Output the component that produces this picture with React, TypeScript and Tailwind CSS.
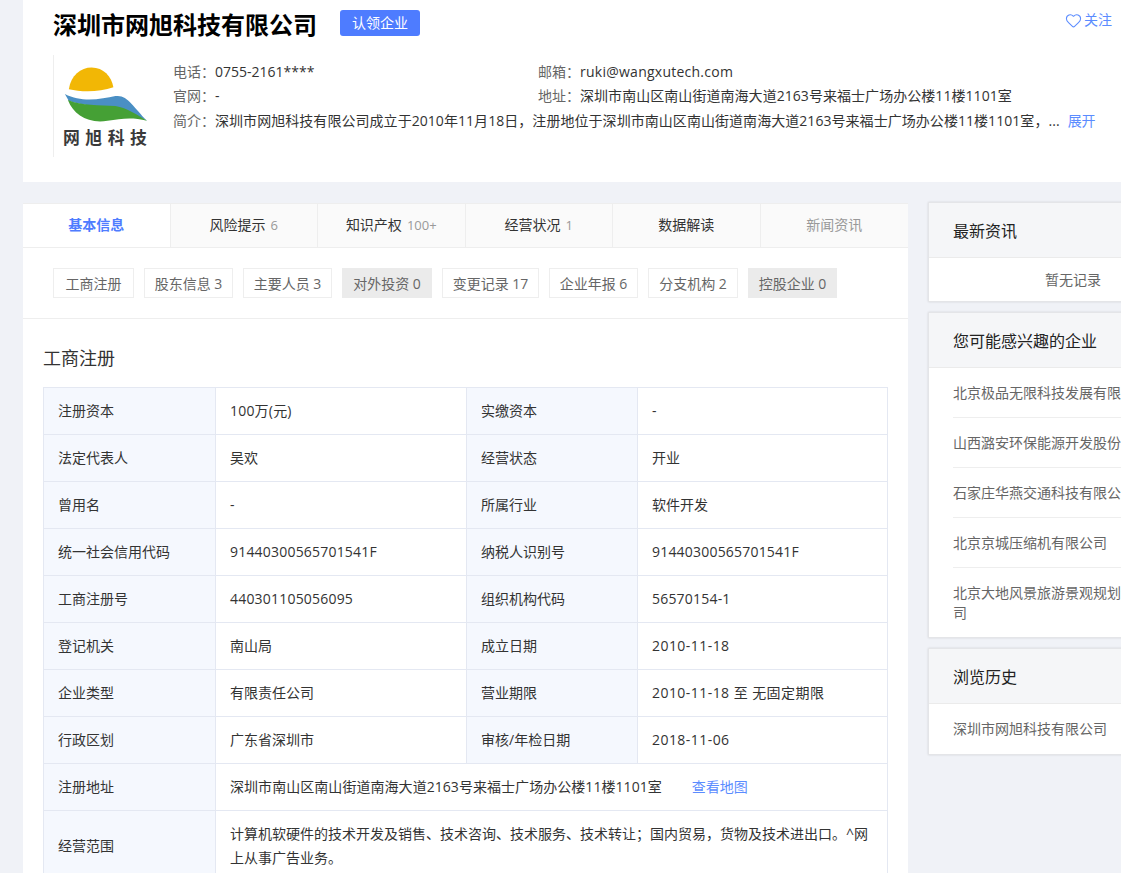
import React from "react";
import { Heart } from "lucide-react";

const FONT = "font-['Open_Sans','Noto_Sans_CJK_SC',sans-serif]";

const tabs = [
  { name: "基本信息", active: true },
  { name: "风险提示", num: "6" },
  { name: "知识产权", num: "100+" },
  { name: "经营状况", num: "1" },
  { name: "数据解读" },
  { name: "新闻资讯", disabled: true },
];

const subTabs = [
  { name: "工商注册", w: "w-[81px]" },
  { name: "股东信息 3", w: "w-[89px]" },
  { name: "主要人员 3", w: "w-[89px]" },
  { name: "对外投资 0", w: "w-[90px]", off: true },
  { name: "变更记录 17", w: "w-[97px]" },
  { name: "企业年报 6", w: "w-[89px]" },
  { name: "分支机构 2", w: "w-[90px]" },
  { name: "控股企业 0", w: "w-[89px]", off: true },
];

const rows = [
  ["注册资本", "100万(元)", "实缴资本", "-"],
  ["法定代表人", "吴欢", "经营状态", "开业"],
  ["曾用名", "-", "所属行业", "软件开发"],
  ["统一社会信用代码", "91440300565701541F", "纳税人识别号", "91440300565701541F"],
  ["工商注册号", "440301105056095", "组织机构代码", "56570154-1"],
  ["登记机关", "南山局", "成立日期", "2010-11-18"],
  ["企业类型", "有限责任公司", "营业期限", "2010-11-18 至 无固定期限"],
  ["行政区划", "广东省深圳市", "审核/年检日期", "2018-11-06"],
];

const related = [
  "北京极品无限科技发展有限责任公司",
  "山西潞安环保能源开发股份有限公司",
  "石家庄华燕交通科技有限公司",
  "北京京城压缩机有限公司",
  "北京大地风景旅游景观规划设计有限公司",
];

// numbers run a little wider in the reference than in Open Sans
const valueClass = (v: string) => {
  if (/^\d{4}-/.test(v)) return "tracking-[0.45px]";
  if (/^\d/.test(v)) return "tracking-[0.2px]";
  return "";
};

const Logo = () => (
  <svg width="100" height="102" viewBox="0 0 100 102" className="shrink-0 border-l border-[#eeeeee]">
    <path d="M15 34 C17 20 27 12 38 12 C50 12 58 21 60 32 C46 37 28 37 15 34 Z" fill="#f2b705" />
    <path d="M11 39 C28 48 48 44 62 41 C74 39 80 52 94 66 C84 60 72 58 62 55 C44 51 26 50 15 46 Z" fill="#4a8fc4" />
    <path d="M14 45 C28 51 46 50 62 51 C74 53 84 60 94 66 C78 62 68 64 54 66 C34 69 20 60 14 45 Z" fill="#45a035" />
    <text x="9" y="89" fontSize="17" fontWeight="700" letterSpacing="5.6" fill="#3a3a3a" fontFamily="'Noto Sans CJK SC', sans-serif">
      网旭科技
    </text>
  </svg>
);

const SideCard = ({ title, children }: { title: string; children: React.ReactNode }) => (
  <div className="w-[290px] bg-white border border-[#e4e5e8] shadow-[0_0_2px_rgba(0,0,0,0.12)]">
    <div className="h-[55px] pl-6 pt-0.5 flex items-center bg-[#f5f6f8] border-b border-[#ebebeb] text-base text-[#222]">
      {title}
    </div>
    {children}
  </div>
);

export default function App() {
  return (
    <div className={`${FONT} w-[1121px] h-[873px] overflow-hidden bg-[#f0f2f7] pl-[23px] text-sm text-[#333]`}>
      <div className="w-[1098px] h-[182px] bg-white pl-[30px] pr-[9px]">
        <div className="h-[55px] flex">
          <h1 className="text-2xl font-bold text-black leading-[50px]">深圳市网旭科技有限公司</h1>
          <div className="ml-[23px] mt-[10px] w-[80px] h-[26px] flex items-center justify-center rounded-[3px] bg-[#4e7cff] text-white">
            认领企业
          </div>
          <div className="ml-auto mt-[10px] h-5 flex items-center gap-0.5 text-[#5b8cff]">
            <Heart size={17} strokeWidth={1.5} />
            <span>关注</span>
          </div>
        </div>
        <div className="flex">
          <Logo />
          <div className="ml-5 pt-[5px] flex-1 min-w-0 leading-6 text-[#666]">
            <div className="flex">
              <div className="w-[365px]">
                电话：<span className="text-[#333]">0755-2161****</span>
              </div>
              <div>
                邮箱：<span className="text-[#333] tracking-[0.25px]">ruki@wangxutech.com</span>
              </div>
            </div>
            <div className="flex">
              <div className="w-[365px]">
                官网：<span className="text-[#333]">-</span>
              </div>
              <div>
                地址：<span className="text-[#333] tracking-[0.05px]">深圳市南山区南山街道南海大道2163号来福士广场办公楼11楼1101室</span>
              </div>
            </div>
            <div className="flex mt-px">
              <span className="shrink-0">简介：</span>
              <span className="text-[#333] whitespace-nowrap tracking-[0.05px]">
                深圳市网旭科技有限公司成立于2010年11月18日，注册地位于深圳市南山区南山街道南海大道2163号来福士广场办公楼11楼1101室，...
              </span>
              <span className="ml-2 shrink-0 text-[#5b8cff]">展开</span>
            </div>
          </div>
        </div>
      </div>

      <div className="flex items-start mt-[21px]">
        <div className="w-[885px] h-[680px] bg-white">
          <div className="grid grid-cols-6 h-[45px] border-t border-[#eeeeee]">
            {tabs.map((t) => (
              <div
                key={t.name}
                className={
                  t.active
                    ? "flex items-center justify-center pb-0.5 border-r border-b border-[#eeeeee] font-bold text-[#4e7cff]"
                    : `flex items-center justify-center pb-0.5 bg-[#fafafa] border-b border-r border-[#eeeeee] last:border-r-0 ${t.disabled ? "text-[#999]" : "text-[#333]"}`
                }
              >
                <p>
                  {t.name}
                  {t.num && <span className="ml-[5px] text-[13px] text-[#999]">{t.num}</span>}
                </p>
              </div>
            ))}
          </div>

          <div className="h-[71px] pl-[30px] pt-5 flex gap-2.5 border-b border-[#eeeeee]">
            {subTabs.map((s) => (
              <div
                key={s.name}
                className={
                  s.off
                    ? `${s.w} h-[30px] pt-0.5 flex items-center justify-center whitespace-nowrap bg-[#ebebeb] text-[#666]`
                    : `${s.w} h-[30px] pt-0.5 flex items-center justify-center whitespace-nowrap border border-[#eeeeee] text-[#666]`
                }
              >
                {s.name}
              </div>
            ))}
          </div>

          <div className="px-5">
            <h2 className="mt-[25px] mb-[15px] text-lg leading-[28px] text-[#333]">工商注册</h2>
            <table className="w-[844px] table-fixed border-collapse text-[#333]">
              <colgroup>
                <col className="w-[172px]" />
                <col className="w-[251px]" />
                <col className="w-[171px]" />
                <col className="w-[250px]" />
              </colgroup>
              <tbody>
                {rows.map((r) => (
                  <tr key={r[0]} className="h-[47px]">
                    <td className="pl-3.5 border border-[#e4e8f2] bg-[#f5f8fe]">{r[0]}</td>
                    <td className={`pl-3.5 border border-[#e4e8f2] ${valueClass(r[1])}`}>{r[1]}</td>
                    <td className="pl-3.5 border border-[#e4e8f2] bg-[#f5f8fe]">{r[2]}</td>
                    <td className={`pl-3.5 border border-[#e4e8f2] ${valueClass(r[3])}`}>{r[3]}</td>
                  </tr>
                ))}
                <tr className="h-[47px]">
                  <td className="pl-3.5 border border-[#e4e8f2] bg-[#f5f8fe]">注册地址</td>
                  <td colSpan={3} className="pl-3.5 border border-[#e4e8f2]">
                    <span className="tracking-[0.05px]">深圳市南山区南山街道南海大道2163号来福士广场办公楼11楼1101室</span>
                    <span className="ml-[30px] text-[#5b8cff]">查看地图</span>
                  </td>
                </tr>
                <tr>
                  <td className="pl-3.5 border border-[#e4e8f2] bg-[#f5f8fe]">经营范围</td>
                  <td colSpan={3} className="px-3.5 py-[11px] border border-[#e4e8f2] leading-6">
                    计算机软硬件的技术开发及销售、技术咨询、技术服务、技术转让；国内贸易，货物及技术进出口。^网上从事广告业务。
                  </td>
                </tr>
              </tbody>
            </table>
          </div>
        </div>

        <div className="ml-5 -mt-px flex flex-col gap-2.5">
          <SideCard title="最新资讯">
            <div className="h-[43px] flex items-center justify-center text-[#666]">暂无记录</div>
          </SideCard>
          <SideCard title="您可能感兴趣的企业">
            <div className="px-6 text-[#666]">
              {related.map((r) => (
                <div key={r} className="pt-[15px] pb-[14px] leading-5 border-b border-[#eeeeee] last:border-b-0">
                  {r}
                </div>
              ))}
            </div>
          </SideCard>
          <SideCard title="浏览历史">
            <div className="h-[50px] px-6 flex items-center text-[#666]">深圳市网旭科技有限公司</div>
          </SideCard>
        </div>
      </div>
    </div>
  );
}
